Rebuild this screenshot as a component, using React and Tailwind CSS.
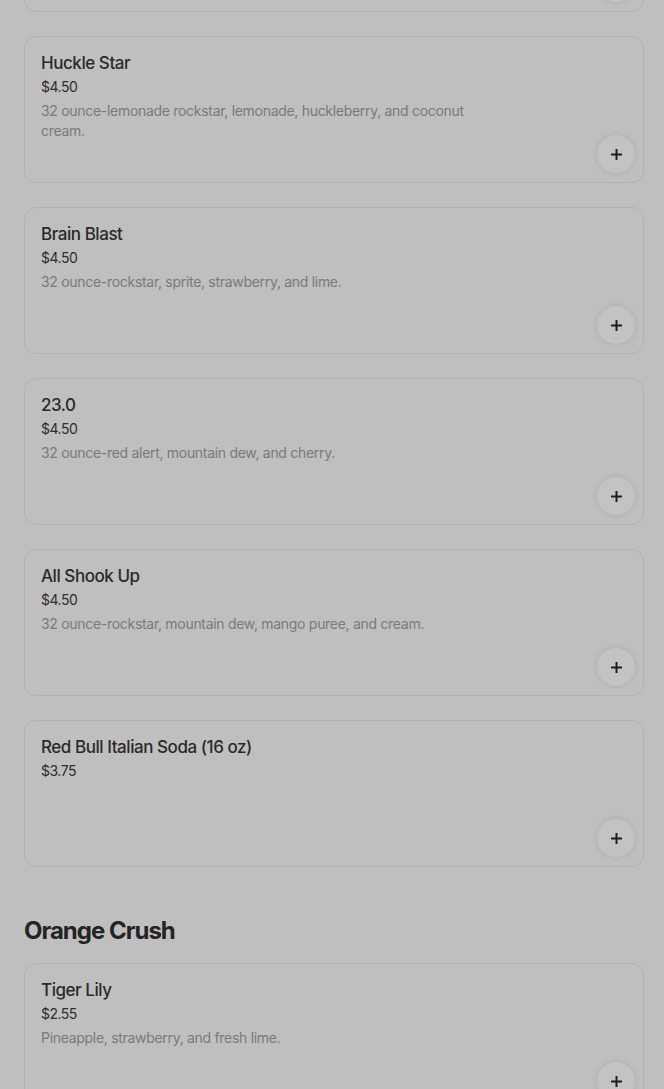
import React from "react";

const Plus = () => (
  <svg width="13" height="13" viewBox="0 0 13 13" fill="none">
    <path d="M6.5 1v11M1 6.5h11" stroke="#1f1f1f" strokeWidth="2" />
  </svg>
);

function Card({ title, price, desc, className = "" }) {
  return (
    <div className={`relative h-[147px] rounded-xl border border-[#b2b2b2] px-4 pt-[15px] ${className}`}>
      {title && (
        <div className="text-[17px] leading-[22px] font-medium tracking-[-0.45px] text-[#2a2a2a]">{title}</div>
      )}
      {price && (
        <div className="mt-[3px] text-[14px] leading-5 tracking-[-0.5px] text-[#2e2e2e]">{price}</div>
      )}
      {desc && (
        <div className="mt-[4px] max-w-[440px] text-[14px] leading-5 text-[#7a7a7a] tracking-[-0.3px]">
          {desc}
        </div>
      )}
      <button className="absolute right-[8px] bottom-[9px] flex h-[38px] w-[38px] items-center justify-center rounded-full bg-[#c3c3c3] shadow-[0_0_6px_rgba(0,0,0,0.1)]">
        <Plus />
      </button>
    </div>
  );
}

export default function App() {
  const items = [
    {
      title: "Huckle Star",
      price: "$4.50",
      desc: "32 ounce-lemonade rockstar, lemonade, huckleberry, and coconut cream.",
    },
    { title: "Brain Blast", price: "$4.50", desc: "32 ounce-rockstar, sprite, strawberry, and lime." },
    { title: "23.0", price: "$4.50", desc: "32 ounce-red alert, mountain dew, and cherry." },
    {
      title: "All Shook Up",
      price: "$4.50",
      desc: "32 ounce-rockstar, mountain dew, mango puree, and cream.",
    },
    { title: "Red Bull Italian Soda (16 oz)", price: "$3.75", desc: "" },
  ];
  return (
    <div
      className="h-[1089px] overflow-hidden bg-[#bfbfbf] pl-6 pr-5"
      style={{ fontFamily: "Inter, 'Noto Sans', sans-serif" }}
    >
      <div className="-mt-[135px] flex flex-col gap-6">
        <Card />
        {items.map((it) => (
          <Card key={it.title} {...it} />
        ))}
      </div>
      <h2 className="mt-12 text-[24px] leading-8 font-bold tracking-[-1px] text-[#242424]">
        Orange Crush
      </h2>
      <div className="mt-4 flex flex-col gap-6">
        <Card title="Tiger Lily" price="$2.55" desc="Pineapple, strawberry, and fresh lime." />
      </div>
    </div>
  );
}
